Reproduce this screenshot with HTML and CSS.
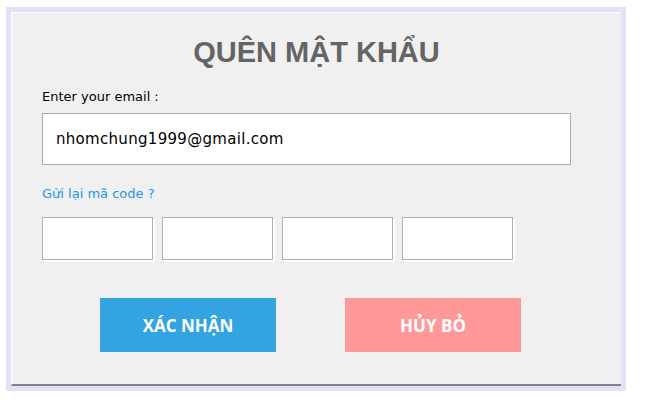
FILE: index.html
```html
<!DOCTYPE html>
<html lang="vi">
<head>
<meta charset="utf-8">
<title>Quên mật khẩu</title>
<link rel="stylesheet" href="styles.css">
</head>
<body>
<div class="frame">
  <div class="panel">
    <h1 class="title">QUÊN MẬT KHẨU</h1>
    <label class="label" for="email">Enter your email :</label>
    <div class="email-box" id="email">nhomchung1999@gmail.com</div>
    <a class="resend" href="#">Gửi lại mã code ?</a>
    <div class="codes">
      <div class="code"></div>
      <div class="code"></div>
      <div class="code"></div>
      <div class="code"></div>
    </div>
    <div class="actions">
      <button class="btn btn-confirm">XÁC NHẬN</button>
      <button class="btn btn-cancel">HỦY BỎ</button>
    </div>
  </div>
</div>
</body>
</html>
```
FILE: styles.css
```css
html, body {
  margin: 0;
  padding: 0;
  background: #ffffff;
}

body {
  padding: 7px 0 0 6px;
  font-family: "DejaVu Sans", sans-serif;
}

.frame {
  width: 620px;
  height: 384px;
  box-sizing: border-box;
  border: 5px solid #e1e1fa;
}

.panel {
  height: 374px;
  box-sizing: border-box;
  background: #f0f0f0;
  border-top: 1px solid #ffffff;
  border-left: 1px solid #ffffff;
  border-bottom: 2px solid #858585;
  padding: 22px 0 0 30px;
  display: flex;
  flex-direction: column;
  align-items: flex-start;
}

.title {
  align-self: stretch;
  margin: 0 0 0 -30px;
  text-align: center;
  font-family: "Liberation Sans", Arial, sans-serif;
  font-weight: bold;
  font-size: 29px;
  line-height: 34px;
  color: #646464;
}

.label {
  margin-top: 20px;
  font-size: 13px;
  line-height: 16px;
  color: #000000;
}

.email-box {
  margin-top: 8px;
  width: 529px;
  height: 52px;
  box-sizing: border-box;
  background: #ffffff;
  border: 1px solid #ababab;
  padding-left: 13px;
  display: flex;
  align-items: center;
  font-size: 15px;
  letter-spacing: 0.3px;
  color: #000000;
}

.resend {
  margin-top: 21px;
  font-size: 13px;
  line-height: 16px;
  color: #2196f3;
  text-decoration: none;
}

.codes {
  margin-top: 15px;
  display: flex;
  gap: 9px;
}

.code {
  width: 111px;
  height: 43px;
  box-sizing: border-box;
  background: #ffffff;
  border: 1px solid #b0b0b0;
  box-shadow: 2px 2px 0 #ffffff;
}

.actions {
  margin-top: 38px;
  margin-left: 58px;
  display: flex;
  gap: 69px;
}

.btn {
  width: 176px;
  height: 54px;
  border: none;
  padding: 0;
  font-family: "Open Sans", sans-serif;
  font-weight: bold;
  font-size: 17px;
  color: #ffffff;
  cursor: pointer;
}

.btn-confirm {
  background: #33a3e1;
}

.btn-cancel {
  background: #ff9999;
}
```
